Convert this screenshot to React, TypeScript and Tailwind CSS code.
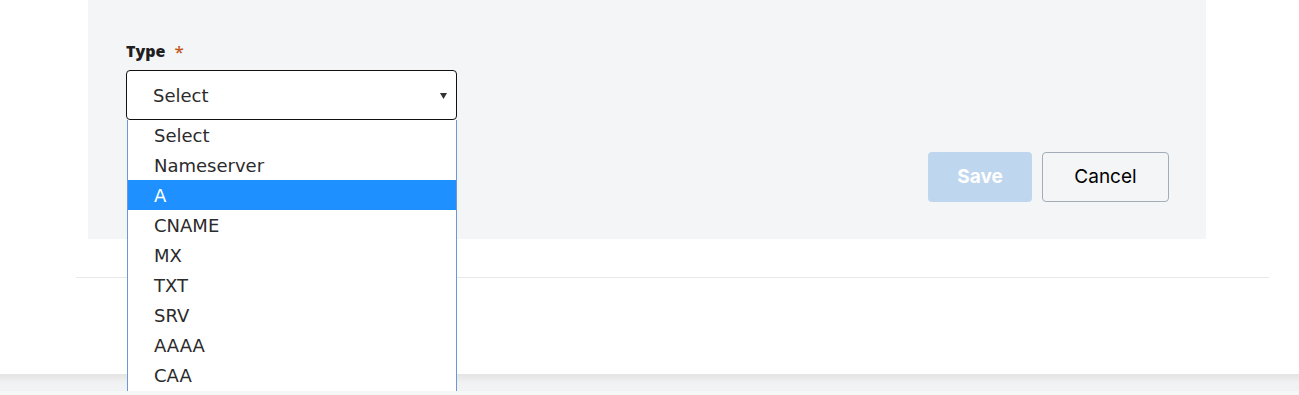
import React from "react";

const options = ["Select", "Nameserver", "A", "CNAME", "MX", "TXT", "SRV", "AAAA", "CAA"];

export default function App() {
  return (
    <div className="relative w-full h-[395px] overflow-hidden bg-white">
      {/* Form panel */}
      <div className="ml-[88px] w-[1118px] h-[239px] bg-[#f4f5f7] flex justify-between">
        <div className="pl-[38px] pt-[41px]">
          <div className="h-[20px] flex items-center gap-[9px] font-['Open_Sans',sans-serif] text-[16px] font-extrabold text-[#1f1f1f]">
            <span>Type</span>
            <span className="text-[#c2591f] font-semibold text-[17px] leading-none">*</span>
          </div>
          <div className="mt-[9px] relative w-[331px] h-[50px] border border-[#111] rounded-[4px] bg-white flex items-center pl-[26px] pt-[1px] font-['DejaVu_Sans',sans-serif] text-[18px] text-[#2b2b2b]">
            <span>Select</span>
            <svg className="absolute right-[9px] top-[22px]" width="7" height="6" viewBox="0 0 7 6">
              <polygon points="0,0 7,0 3.5,6" fill="#333" />
            </svg>
          </div>
        </div>
        <div className="pt-[152px] pr-[37px] flex gap-[10px] font-['Inter',sans-serif] text-[19px]">
          <button className="w-[104px] h-[50px] rounded-[4px] bg-[#bfd7ee] text-white font-bold">
            Save
          </button>
          <button className="w-[127px] h-[50px] rounded-[4px] border border-[#a3adb8] bg-[#f4f5f7] text-black">
            Cancel
          </button>
        </div>
      </div>

      {/* separator */}
      <div className="mt-[38px] ml-[76px] w-[1193px] h-px bg-[#e6e8eb]" />

      {/* bottom band */}
      <div className="mt-[96px] h-[17px] bg-gradient-to-b from-[#e4e4e4] via-[#f0f1f2] to-[#f2f3f4]" />
      <div className="relative z-20 h-[4px] bg-[#f6f7f7]" />

      {/* open dropdown list */}
      <div className="absolute z-10 left-[127px] top-[120px] w-[330px] h-[271px] bg-white border-x border-[#6c98d6] overflow-hidden font-['DejaVu_Sans',sans-serif] text-[18px] text-[#2b2b2b]">
        {options.map((o) => (
          <div
            key={o}
            className={
              o === "A"
                ? "h-[30px] flex items-center pl-[26px] bg-[#1e90ff] text-white"
                : "h-[30px] flex items-center pl-[26px]"
            }
          >
            {o}
          </div>
        ))}
      </div>
    </div>
  );
}
